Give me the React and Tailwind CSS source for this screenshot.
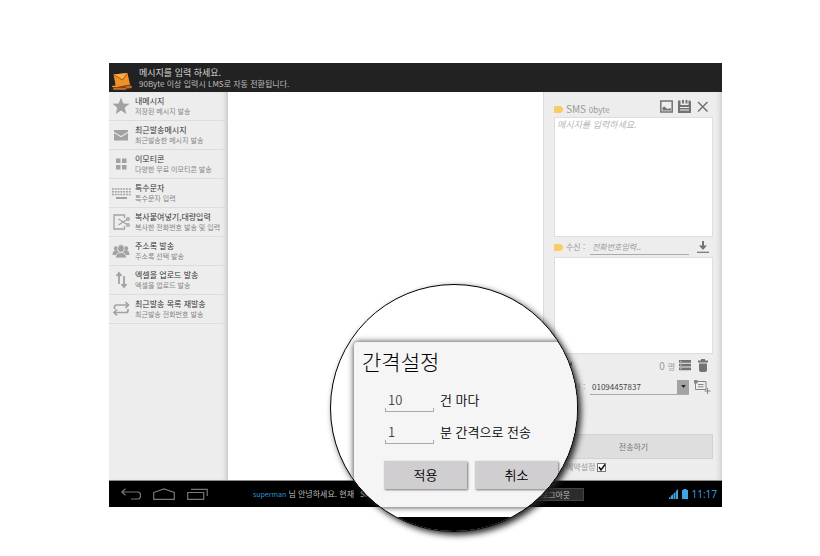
import React from "react";

const MENU = [
  { icon: "star", title: "내메시지", sub: "저장된 메시지 발송" },
  { icon: "mail", title: "최근발송메시지", sub: "최근발송한 메시지 발송" },
  { icon: "grid", title: "이모티콘", sub: "다양한 무료 이모티콘 발송" },
  { icon: "keyboard", title: "특수문자", sub: "특수문자 입력" },
  { icon: "cut", title: "복사붙여넣기,대량입력", sub: "복사한 전화번호 발송 및 입력" },
  { icon: "people", title: "주소록 발송", sub: "주소록 선택 발송" },
  { icon: "updown", title: "엑셀을 업로드 발송", sub: "엑셀을 업로드 발송" },
  { icon: "repeat", title: "최근발송 목록 재발송", sub: "최근발송 전화번호 발송" },
];

const SHAPES = {
  star: <path d="M10 1.500l2.300 6 6.200.3-4.800 4 1.600 6.200L10 14.600 4.700 18l1.600-6.200-4.800-4 6.200-.3z" fill="currentColor" />,
  mail: (
    <>
      <path d="M3 5h14v1.800L10 11 3 6.800z" fill="currentColor" />
      <path d="M3 8l7 4.300L17 8v7.500H3z" fill="currentColor" />
    </>
  ),
  grid: <path d="M5 4.500h4.500V9H5zM11 4.500h4.500V9H11zM5 11h4.500v4.500H5zM11 11h4.500v4.500H11z" fill="currentColor" />,
  keyboard: (
    <g stroke="currentColor" strokeWidth="1.500">
      <path d="M1 6h19M1 8.800h19M1 11.600h19" strokeDasharray="1.900 .9" />
      <path d="M5 15h11" strokeWidth="2" />
    </g>
  ),
  cut: (
    <g fill="none" stroke="currentColor" strokeWidth="1.300">
      <path d="M13.500 6V3H3v14h10.500v-3" />
      <path d="M7.500 7l8.500 5.500M7.500 13L16 7.500" />
      <circle cx="17" cy="7" r="1.300" />
      <circle cx="17" cy="13" r="1.300" />
    </g>
  ),
  people: (
    <g fill="currentColor">
      <circle cx="5" cy="7.500" r="2.200" />
      <circle cx="15" cy="7.500" r="2.200" />
      <path d="M1.500 14c0-3 1-4.500 3.500-4.500h10c2.500 0 3.500 1.500 3.500 4.500z" />
      <g stroke="#ededed" strokeWidth=".8">
        <ellipse cx="10" cy="7.500" rx="3.400" ry="3.900" />
        <path d="M4.500 17c0-3.500 2-5.500 5.500-5.500s5.500 2 5.500 5.500z" />
      </g>
    </g>
  ),
  updown: (
    <g fill="none" stroke="currentColor" strokeWidth="1.800">
      <path d="M8 14V3.500M5.500 6L8 3l2.500 3M13 6v10.500M10.500 14l2.500 3 2.500-3" />
    </g>
  ),
  repeat: (
    <g fill="none" stroke="currentColor" strokeWidth="1.700">
      <path d="M3.500 10V8q0-2 2-2H17M14.500 3L17.500 6l-3 3M17 10v1.500q0 2-2 2H3.500M6 10.500l-3 3 3 3" />
    </g>
  ),
};

function MenuIcon({ name }) {
  return (
    <svg viewBox="0 0 20 20" className="size-5 shrink-0 overflow-visible text-[#a2a2a2]" aria-hidden="true">
      {SHAPES[name]}
    </svg>
  );
}

function Header() {
  return (
    <header className="flex h-[29px] items-center gap-[7px] bg-[#222] pl-[3px] text-[#d8d8d8]">
      <svg viewBox="0 0 20 20" className="mt-[6px] size-5 shrink-0" aria-hidden="true">
        <path d="M0 15l4-2h14l2 4-6 1.500H2z" fill="#8d4312" />
        <path d="M1.500 3.500L15.500 2 18 13.500 4 16z" fill="#f0902a" />
        <path d="M1.500 3.500L15.500 2 10.500 9z" fill="#ffab45" />
        <path d="M1.500 3.500l9 5.500 5-7" fill="none" stroke="#9b4b12" strokeWidth=".9" />
        <path d="M0 15.500h6M1 18h13M14 16h6" stroke="#f5a33a" strokeWidth=".9" />
      </svg>
      <div>
        <h1 className="text-[9px] leading-[12px]">메시지를 입력 하세요.</h1>
        <p className="text-[8px] leading-[10px] text-[#bdbdbd]">90Byte 이상 입력시 LMS로 자동 전환됩니다.</p>
      </div>
    </header>
  );
}

function Sidebar() {
  return (
    <nav className="w-[119px] shrink-0 bg-[#ededed] shadow-[inset_-5px_0_5px_-3px_#c4c4c4]">
      <ul>
        {MENU.map((m) => (
          <li key={m.title} className="border-b border-[#dcdcdc]">
            <a href="#" className="flex h-7 items-center gap-1 pl-[2px] whitespace-nowrap">
              <MenuIcon name={m.icon} />
              <span>
                <span className="block text-[8px] leading-[10px] text-[#333]">{m.title}</span>
                <span className="block text-[7px] leading-[10px] text-[#858585]">{m.sub}</span>
              </span>
            </a>
          </li>
        ))}
      </ul>
    </nav>
  );
}

function Tag() {
  return (
    <svg viewBox="0 0 9 7" className="h-[7px] w-[9px] shrink-0" aria-hidden="true">
      <path d="M0 0h6.500L9 2v3L6.500 7H0z" fill="#f9cd66" />
    </svg>
  );
}

function Composer() {
  return (
    <section className="flex w-[179px] shrink-0 flex-col border-l border-[#dadada] bg-[#ededed] pr-[9px] pl-[10px] text-[#999] shadow-[inset_-5px_0_5px_-3px_#cdcdcd]">
      <div className="flex h-[25px] items-center pt-1">
        <label htmlFor="msg" className="flex items-center gap-[3px] pt-[6px] text-[10px] leading-3">
          <Tag />
          <span>SMS <span className="text-[8px]">0byte</span></span>
        </label>
        <div className="ml-auto flex items-center gap-[5px] pr-1 text-[#737373]">
          <button type="button" aria-label="이미지">
            <svg viewBox="0 0 13 13" className="block size-[13px]">
              <path d="M.8 1h11.400v11H.8z" fill="none" stroke="currentColor" strokeWidth="1.500" />
              <path d="M2.500 10.500V7.500l2-1 2 2 2 .5 1.500-1 1 1v1.500z" fill="currentColor" />
            </svg>
          </button>
          <button type="button" aria-label="저장">
            <svg viewBox="0 0 13 13" className="block size-[13px]">
              <path d="M0 .5h2.500V5h8V.5H12l1 1V13H0z" fill="currentColor" />
              <path d="M4 0h2v3.500H4zM7.500 0h2v3.500h-2z" fill="currentColor" />
              <path d="M2 7.500h9M2 10h9" stroke="#ededed" strokeWidth="1.200" />
            </svg>
          </button>
          <button type="button" aria-label="닫기">
            <svg viewBox="0 0 13 13" className="block size-[13px]">
              <path d="M2 2l9.500 9.500M11.500 2L2 11.500" stroke="currentColor" strokeWidth="1.500" />
            </svg>
          </button>
        </div>
      </div>
      <textarea
        id="msg"
        placeholder="메시지를 입력하세요."
        className="block h-[120px] w-full resize-none border border-[#ddd] bg-white px-[2px] text-[9px] leading-[14px] outline-none placeholder:text-[#b5b5b5] placeholder:italic"
      />
      <div className="flex h-5 items-center">
        <label htmlFor="to" className="flex w-9 items-center gap-[3px] text-[8px]">
          <Tag />
          수신 :
        </label>
        <input
          id="to"
          placeholder="전화번호입력.."
          className="h-4 w-0 flex-1 border-b border-[#aaa] px-[2px] text-[8px] outline-none placeholder:text-[#999] placeholder:italic"
        />
        <button type="button" aria-label="추가" className="mr-1 ml-2 text-[#737373]">
          <svg viewBox="0 0 12 12" className="block size-3">
            <path d="M5 0h2v4.500h3L6 9 2 4.500h3z" fill="currentColor" />
            <path d="M0 11.300h12" stroke="currentColor" strokeWidth="1.200" />
          </svg>
        </button>
      </div>
      <div className="h-[97px] border border-[#ddd] bg-white" />
      <div className="flex h-[22px] items-center text-[#737373]">
        <svg viewBox="0 0 6 6" className="ml-3 size-[6px]" aria-hidden="true">
          <path d="M0 3l6-3v4z" fill="currentColor" />
        </svg>
        <p className="ml-auto text-[10px] text-[#999]">
          0 <span className="text-[8px]">명</span>
        </p>
        <button type="button" aria-label="목록" className="ml-1">
          <svg viewBox="0 0 12 12" className="block size-3">
            <path d="M0 1h12v2.800H0zM0 4.700h12v2.800H0zM0 8.400h12v2.800H0z" fill="currentColor" />
            <path d="M1.200 2.400h1.300M1.200 6.100h1.300M1.200 9.800h1.300" stroke="#ededed" strokeWidth=".8" />
          </svg>
        </button>
        <button type="button" aria-label="삭제" className="mr-[5px] ml-[7px]">
          <svg viewBox="0 0 10 13" className="block h-[13px] w-[10px]">
            <path d="M0 1.500h3V0h4v1.500h3v2H0zM1 4.500h8V11q0 2-2 2H3q-2 0-2-2z" fill="currentColor" />
          </svg>
        </button>
      </div>
      <div className="flex h-[22px] items-center">
        <label htmlFor="from" className="flex w-9 items-center gap-[3px] text-[8px]">
          <Tag />
          발신 :
        </label>
        <div className="relative flex-1 border-b border-[#aaa]">
          <select id="from" className="block h-[14px] w-full appearance-none pl-[2px] text-[8px] text-[#444] outline-none">
            <option>01094457837</option>
          </select>
          <span className="pointer-events-none absolute top-0 right-0 flex h-[14px] w-3 items-center justify-center bg-[#a3a3a3]">
            <svg viewBox="0 0 6 4" className="h-[3px] w-[5px]" aria-hidden="true">
              <path d="M0 0h6L3 4z" fill="#222" />
            </svg>
          </span>
        </div>
        <button type="button" aria-label="발신번호 추가" className="mr-[2px] ml-[5px] text-[#858585]">
          <svg viewBox="0 0 17 14" className="block h-[14px] w-[17px]">
            <path d="M1.500 1.500h10.500v8h-10.500zM4 4.500h5.500M4 6.800h5.500M10.500 11h6M13.500 8v6" fill="none" stroke="currentColor" />
            <path d="M0 0h3.500v3.500H0z" fill="currentColor" />
          </svg>
        </button>
      </div>
      <button type="button" className="mt-9 h-[25px] border border-[#d2d2d2] bg-[#dedede] text-[8px] text-[#777]">
        전송하기
      </button>
      <label className="flex h-4 items-center gap-[2px] pl-3 text-[8px]">
        예약설정
        <input
          type="checkbox"
          defaultChecked
          className="peer size-[9px] appearance-none border border-[#777] bg-white"
        />
        <svg viewBox="0 0 9 9" className="-ml-[11px] hidden size-[9px] peer-checked:block" aria-hidden="true">
          <path d="M2 4l2 3 4-5.500" fill="none" stroke="#111" strokeWidth="1.500" />
        </svg>
      </label>
    </section>
  );
}

function Footer() {
  return (
    <footer className="flex h-[27px] items-center border-t border-[#8b8b8b] bg-black text-[8px] whitespace-nowrap text-[#bbb]">
      <div className="flex w-36 shrink-0 gap-3 pl-3 text-[#777]">
        <button type="button" aria-label="뒤로">
          <svg viewBox="0 0 20 12" className="block h-3 w-5">
            <path d="M4.500.8L.8 4l3.700 3.200M1 4h15.500q3 0 3 3.500t-3 3.500H10" fill="none" stroke="currentColor" strokeWidth="1.200" />
          </svg>
        </button>
        <button type="button" aria-label="홈">
          <svg viewBox="0 0 22 12" className="block h-3 w-[22px]">
            <path d="M.7 4.500L11 1l10.300 3.500v6.800H.7z" fill="none" stroke="currentColor" strokeWidth="1.200" />
          </svg>
        </button>
        <button type="button" aria-label="최근 앱">
          <svg viewBox="0 0 21 12" className="block h-3 w-[21px]">
            <path d="M.7 4.500h16v6.800H.7zM4 1.300h16.200V8" fill="none" stroke="currentColor" strokeWidth="1.200" />
          </svg>
        </button>
      </div>
      <p>
        <span className="text-[7px] text-[#2f97d8]">superman</span> 님 안녕하세요. 현재
      </p>
      <p className="ml-[6px]">SMS 1,024건</p>
      <button type="button" className="ml-auto h-[13px] w-14 shrink-0 border border-[#444] bg-[#2c2c2c]">
        로그아웃
      </button>
      <div className="ml-[85px] flex shrink-0 items-center gap-1 pr-[5px] text-[#3fa5e0]">
        <svg viewBox="0 0 9 10" className="h-[10px] w-[9px]" aria-hidden="true">
          <path d="M0 10V8.500l1.500-1V10zM2 10V6.800l2-1.500V10zM4.500 10V4.500l2-1.500v7zM7 10V2l2-2v10z" fill="currentColor" />
        </svg>
        <svg viewBox="0 0 6 10" className="h-[10px] w-[6px]" aria-hidden="true">
          <path d="M0 1h1.500V0h3v1H6v9H0z" fill="currentColor" />
        </svg>
        <span className="font-['Open_Sans',sans-serif] text-[10px]">11:17</span>
      </div>
    </footer>
  );
}

function Field({ id, value, children }) {
  return (
    <div className="flex h-8 items-center gap-[6px]">
      <div className="relative">
        <input
          id={id}
          defaultValue={value}
          className="block h-6 w-[49px] border-b border-[#aaa] px-[3px] text-[13px] font-[350] text-[#444] outline-none"
        />
        <span className="pointer-events-none absolute bottom-0 left-0 h-1 w-full border-x border-[#aaa]" />
      </div>
      <label htmlFor={id} className="text-[13px] font-[350] whitespace-nowrap">{children}</label>
    </div>
  );
}

function Magnifier() {
  const button = "h-7 w-[83px] bg-[#d1ced1] text-[13px] font-[350] shadow-[1px_1px_2px_#777]";
  return (
    <div className="absolute top-[221px] left-[221px] flex size-[248px] flex-col overflow-hidden rounded-full border border-black bg-white shadow-[3px_3px_6px_#222]">
      <div
        role="dialog"
        aria-labelledby="gap-title"
        className="mt-[57px] ml-[23px] h-[165px] w-64 shrink-0 rounded-t-sm bg-[#f5f5f5] pt-[5px] pl-2 text-black shadow-[0_0_6px_#333]"
      >
        <h2 id="gap-title" className="text-[21px] leading-7 font-light">간격설정</h2>
        <div className="mt-[9px] pl-[23px]">
          <Field id="count" value="10">건 마다</Field>
          <Field id="minutes" value="1">분 간격으로 전송</Field>
        </div>
        <div className="mt-[13px] flex gap-2 pl-[22px]">
          <button type="button" className={button}>적용</button>
          <button type="button" className={button}>취소</button>
        </div>
      </div>
      <div className="mt-[10px] w-full flex-1 bg-black" />
    </div>
  );
}

export default function App() {
  return (
    <main lang="ko" className="min-h-screen bg-white pt-[63px] pr-[98px] pl-[109px] font-['Noto_Sans_CJK_KR',sans-serif]">
      <div className="relative">
        <Header />
        <div className="flex min-h-[388px]">
          <Sidebar />
          <div className="min-w-0 flex-1 bg-white" />
          <Composer />
        </div>
        <Footer />
        <Magnifier />
      </div>
    </main>
  );
}
